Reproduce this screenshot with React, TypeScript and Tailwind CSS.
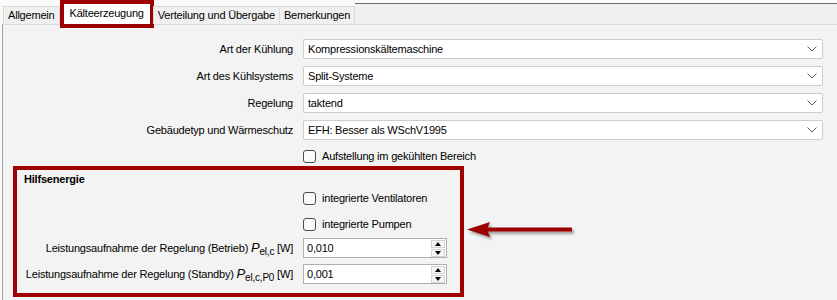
import type { ReactNode } from "react";

const RED = "border-[#9c0000]";

function Tab({ children }: { children: ReactNode }) {
  return (
    <div className="flex h-[18px] items-center border-x border-t border-[#d9d9d9] bg-[#f0f0f0] px-[4px] -ml-px first:ml-0">
      {children}
    </div>
  );
}

function Chevron() {
  return (
    <svg width="10" height="6" viewBox="0 0 10 6" className="shrink-0">
      <polyline points="0.5,0.5 5,5 9.5,0.5" fill="none" stroke="#5a5a5a" strokeWidth="1" />
    </svg>
  );
}

function Combo({ value }: { value: string }) {
  return (
    <div className="flex h-[20px] w-[520px] items-center justify-between rounded-[2px] border border-[#cdcdcd] bg-white pl-[4px] pr-[5px]">
      <span>{value}</span>
      <Chevron />
    </div>
  );
}

function Checkbox({ label }: { label: string }) {
  return (
    <div className="flex h-[13px] items-center gap-[6px] pl-[300px]">
      <span className="size-[13px] shrink-0 rounded-[3px] border border-[#4d4d4d] bg-[#fbfbfb]" />
      <span>{label}</span>
    </div>
  );
}

function SpinInput({ value }: { value: string }) {
  return (
    <div className="flex h-[20px] w-[144px] items-center justify-between border border-[#b0b0b0] bg-white pl-[3px]">
      <span>{value}</span>
      <div className="mr-px flex flex-col gap-px">
        <div className="flex h-[8px] w-[14px] items-center justify-center border border-[#d4d4d4] bg-[#f6f6f6]">
          <svg width="6" height="4" viewBox="0 0 6 4">
            <polygon points="3,0 6,4 0,4" fill="#000" />
          </svg>
        </div>
        <div className="flex h-[8px] w-[14px] items-center justify-center border border-[#d4d4d4] bg-[#f6f6f6]">
          <svg width="6" height="4" viewBox="0 0 6 4">
            <polygon points="0,0 6,0 3,4" fill="#000" />
          </svg>
        </div>
      </div>
    </div>
  );
}

const comboRows = [
  { label: "Art der Kühlung", value: "Kompressionskältemaschine" },
  { label: "Art des Kühlsystems", value: "Split-Systeme" },
  { label: "Regelung", value: "taktend" },
  { label: "Gebäudetyp und Wärmeschutz", value: "EFH: Besser als WSchV1995" },
];

export default function App() {
  return (
    <div className="relative h-[300px] w-[837px] overflow-hidden bg-[#f9f9f9] font-['Liberation_Sans',Arial,sans-serif] text-[11px] tracking-[-0.2px] text-black">
      {/* tab strip */}
      <div className="relative z-10 flex h-[24px] items-end pl-[3px]">
        <Tab>Allgemein</Tab>
        <div className={`-mb-[4px] flex h-[28px] items-center border-4 ${RED} bg-white px-[6px] pb-[1px]`}>
          Kälteerzeugung
        </div>
        <Tab>Verteilung und Übergabe</Tab>
        <Tab>Bemerkungen</Tab>
        <div className="mt-[3px] flex-1 self-stretch border-t border-[#6b6b6b] bg-[#f0f0f0]" />
      </div>

      {/* panel */}
      <div className="ml-[2px] h-[276px] border-l border-t border-l-[#a3a3a3] border-t-[#dadada] bg-[#f3f3f3] pt-[14px]">
        <div className="flex flex-col gap-[7px]">
          {comboRows.map((row) => (
            <div key={row.label} className="flex items-center gap-[10px]">
              <div className="w-[290px] text-right">{row.label}</div>
              <Combo value={row.value} />
            </div>
          ))}
        </div>

        <div className="mt-[10px]">
          <Checkbox label="Aufstellung im gekühlten Bereich" />
        </div>

        {/* Hilfsenergie group */}
        <div className={`ml-[10px] mt-[3px] h-[131px] w-[451px] border-4 ${RED}`}>
          <div className="mt-[1px] h-[14px] pl-[7px] font-bold">Hilfsenergie</div>
          <div className="mt-[7px] -ml-[14px]">
            <Checkbox label="integrierte Ventilatoren" />
          </div>
          <div className="mt-[13px] -ml-[14px]">
            <Checkbox label="integrierte Pumpen" />
          </div>
          <div className="mt-[7px] flex items-center gap-[10px]">
            <div className="w-[276px] text-right">
              Leistungsaufnahme der Regelung (Betrieb) <i className="text-[13px]">P</i>
              <sub className="text-[10px]">el,c</sub> [W]
            </div>
            <SpinInput value="0,010" />
          </div>
          <div className="mt-[6px] flex items-center gap-[10px]">
            <div className="w-[276px] text-right">
              Leistungsaufnahme der Regelung (Standby) <i className="text-[13px]">P</i>
              <sub className="text-[10px]">el,c,P0</sub> [W]
            </div>
            <SpinInput value="0,001" />
          </div>
        </div>
      </div>

      {/* annotation arrow */}
      <svg className="absolute left-[460px] top-[212px]" width="120" height="32" viewBox="0 0 120 32">
        <defs>
          <filter id="sh" x="-10%" y="-30%" width="130%" height="180%">
            <feDropShadow dx="2" dy="2.5" stdDeviation="1.2" floodColor="#000" floodOpacity="0.35" />
          </filter>
        </defs>
        <g filter="url(#sh)" fill="#9c0000">
          <path d="M7 17.5 L30 10 L27 17.5 L30 25 Z" />
          <rect x="27" y="15.5" width="85" height="4" />
        </g>
      </svg>
    </div>
  );
}
